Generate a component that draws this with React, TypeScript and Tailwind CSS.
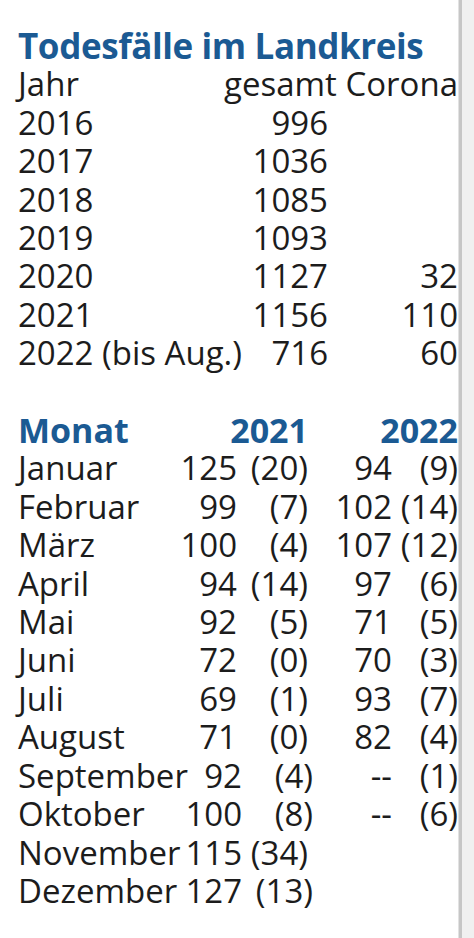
import React from "react";

type YearRow = { label: string; total: string; corona: string };
const years: YearRow[] = [
  { label: "2016", total: "996", corona: "" },
  { label: "2017", total: "1036", corona: "" },
  { label: "2018", total: "1085", corona: "" },
  { label: "2019", total: "1093", corona: "" },
  { label: "2020", total: "1127", corona: "32" },
  { label: "2021", total: "1156", corona: "110" },
  { label: "2022 (bis Aug.)", total: "716", corona: "60" },
];

type MonthRow = {
  m: string;
  a: string;
  ac: string;
  b: string;
  bc: string;
  c1: string;
  c2: string;
  c3: string;
};
const N1 = "w-[219px]";
const N2 = "w-[71px]";
const N3 = "w-[84px]";
const S1 = "w-[224px]";
const S3 = "w-[79px]";
const months: MonthRow[] = [
  { m: "Januar", a: "125", ac: "(20)", b: "94", bc: "(9)", c1: N1, c2: N2, c3: N3 },
  { m: "Februar", a: "99", ac: "(7)", b: "102", bc: "(14)", c1: N1, c2: N2, c3: N3 },
  { m: "März", a: "100", ac: "(4)", b: "107", bc: "(12)", c1: N1, c2: N2, c3: N3 },
  { m: "April", a: "94", ac: "(14)", b: "97", bc: "(6)", c1: N1, c2: N2, c3: N3 },
  { m: "Mai", a: "92", ac: "(5)", b: "71", bc: "(5)", c1: N1, c2: N2, c3: N3 },
  { m: "Juni", a: "72", ac: "(0)", b: "70", bc: "(3)", c1: N1, c2: N2, c3: N3 },
  { m: "Juli", a: "69", ac: "(1)", b: "93", bc: "(7)", c1: N1, c2: N2, c3: N3 },
  { m: "August", a: "71", ac: "(0)", b: "82", bc: "(4)", c1: N1, c2: N2, c3: N3 },
  { m: "September", a: "92", ac: "(4)", b: "--", bc: "(1)", c1: S1, c2: N2, c3: S3 },
  { m: "Oktober", a: "100", ac: "(8)", b: "--", bc: "(6)", c1: S1, c2: N2, c3: S3 },
  { m: "November", a: "115", ac: "(34)", b: "", bc: "", c1: S1, c2: "w-[66px]", c3: N3 },
  { m: "Dezember", a: "127", ac: "(13)", b: "", bc: "", c1: S1, c2: N2, c3: S3 },
];

export default function App() {
  return (
    <div
      className="flex min-h-[938px] w-[474px] bg-white text-[#1c1c1c]"
      style={{ fontFamily: '"Open Sans", "Noto Sans", sans-serif' }}
    >
      <div className="w-[458px] shrink-0 pl-[18px] pt-[27px] text-[33px] leading-[38.4px]">
        <h1 className="whitespace-nowrap text-[35px] font-bold leading-[38.4px] tracking-[-0.4px] text-[#1b5a93]">
          Todesfälle im Landkreis
        </h1>
        <div className="flex">
          <span className="flex-1">Jahr</span>
          <span className="whitespace-nowrap text-right">gesamt Corona</span>
        </div>
        {years.map((y) => (
          <div key={y.label} className="flex">
            <div className="flex w-[310px] justify-between whitespace-nowrap">
              <span>{y.label}</span>
              <span>{y.total}</span>
            </div>
            <div className="w-[130px] text-right">{y.corona}</div>
          </div>
        ))}
        <div className="h-[38.4px]" />
        <div className="flex text-[34px] font-bold text-[#1b5a93]">
          <span className="w-[180px]">Monat</span>
          <span className="w-[110px] text-right">2021</span>
          <span className="flex-1 text-right">2022</span>
        </div>
        {months.map((r) => (
          <div key={r.m} className="flex whitespace-nowrap">
            <div className={`flex justify-between ${r.c1}`}>
              <span>{r.m}</span>
              <span>{r.a}</span>
            </div>
            <div className={`text-right ${r.c2}`}>{r.ac}</div>
            <div className={`text-right ${r.c3}`}>{r.b}</div>
            <div className="flex-1 text-right">{r.bc}</div>
          </div>
        ))}
      </div>
      <div className="w-px bg-[#e2e2e2]" />
      <div className="w-[3px] bg-[#c6c6c6]" />
      <div className="flex-1 bg-[#f0f0f0]" />
    </div>
  );
}
